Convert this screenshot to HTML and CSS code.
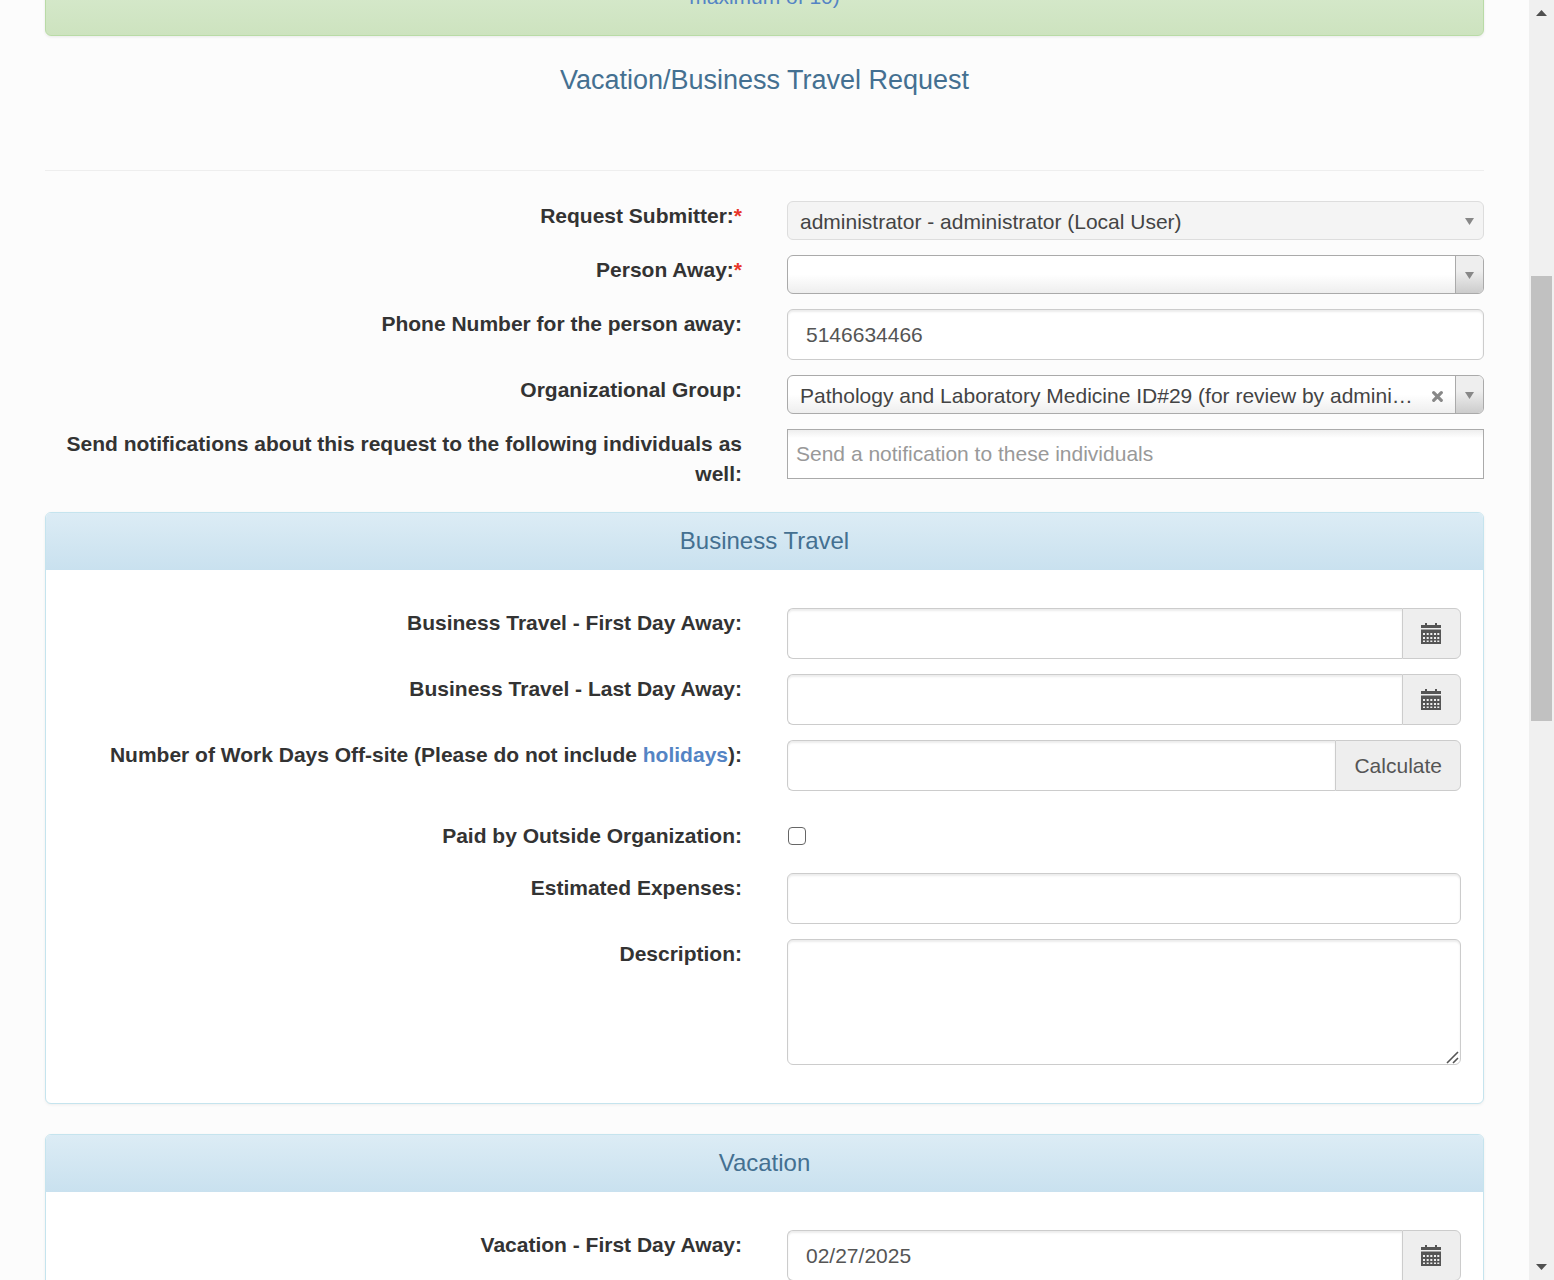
FILE: index.html
```html
<!DOCTYPE html>
<html lang="en">
<head>
<meta charset="utf-8">
<title>Vacation/Business Travel Request</title>
<link rel="stylesheet" href="styles.css">
</head>
<body>
<svg class="sprite" aria-hidden="true">
  <symbol id="calendar" viewBox="0 0 21 21">
    <path fill="currentColor" fill-rule="evenodd" d="M4 0h2v2h8V0h2v2h4v3H0V2h4zM0 6.500h20V21H0zM2 10v2h2v-2zM5.700 10v2h2v-2zM9.300 10v2h2v-2zM13 10v2h2v-2zM16.300 10v2h2v-2zM2 14v2h2v-2zM5.700 14v2h2v-2zM9.300 14v2h2v-2zM13 14v2h2v-2zM16.300 14v2h2v-2zM2 17.500v1.500h2v-1.500zM5.700 17.500v1.500h2v-1.500zM9.300 17.500v1.500h2v-1.500zM13 17.500v1.500h2v-1.500zM16.300 17.500v1.500h2v-1.500z"/>
  </symbol>
</svg>
<main class="page">
  <div class="alert"><a href="#">maximum of 10)</a></div>
  <h1 class="title">Vacation/Business Travel Request</h1>
  <hr class="divider">
  <form class="request">
    <div class="rows">
      <div class="row">
        <label for="submitter">Request Submitter:<span class="required">*</span></label>
        <div class="picker picker-disabled">
          <select id="submitter" disabled><option>administrator - administrator (Local User)</option></select>
        </div>
      </div>
      <div class="row">
        <label for="person">Person Away:<span class="required">*</span></label>
        <div class="picker">
          <select id="person"><option></option></select>
        </div>
      </div>
      <div class="row">
        <label for="phone">Phone Number for the person away:</label>
        <input class="field" id="phone" type="text" value="5146634466">
      </div>
      <div class="row">
        <label for="group">Organizational Group:</label>
        <div class="picker picker-clearable">
          <select id="group"><option>Pathology and Laboratory Medicine ID#29 (for review by administrator)</option></select>
          <button class="clear" type="button" aria-label="Clear">
            <svg width="11" height="11" viewBox="0 0 11 11"><path d="M1.700 1.700l7.600 7.600M9.300 1.700l-7.600 7.600" stroke="#888" stroke-width="3.200" stroke-linecap="round"/></svg>
          </button>
        </div>
      </div>
      <div class="row">
        <label for="notify">Send notifications about this request to the following individuals as well:</label>
        <input class="tags" id="notify" type="text" placeholder="Send a notification to these individuals">
      </div>
    </div>

    <section class="panel">
      <h2 class="panel-heading">Business Travel</h2>
      <div class="panel-body rows">
        <div class="row">
          <label for="travel-first">Business Travel - First Day Away:</label>
          <div class="group">
            <input class="field" id="travel-first" type="text">
            <button class="addon" type="button" aria-label="Choose date"><svg width="21" height="21"><use href="#calendar"/></svg></button>
          </div>
        </div>
        <div class="row">
          <label for="travel-last">Business Travel - Last Day Away:</label>
          <div class="group">
            <input class="field" id="travel-last" type="text">
            <button class="addon" type="button" aria-label="Choose date"><svg width="21" height="21"><use href="#calendar"/></svg></button>
          </div>
        </div>
        <div class="row">
          <label for="days">Number of Work Days Off-site (Please do not include <a href="#">holidays</a>):</label>
          <div class="group">
            <input class="field" id="days" type="text">
            <button class="addon" type="button">Calculate</button>
          </div>
        </div>
        <div class="row row-check">
          <label for="outside">Paid by Outside Organization:</label>
          <input class="check" id="outside" type="checkbox">
        </div>
        <div class="row">
          <label for="expenses">Estimated Expenses:</label>
          <input class="field" id="expenses" type="text">
        </div>
        <div class="row">
          <label for="description">Description:</label>
          <div class="area">
            <textarea class="field" id="description"></textarea>
            <svg class="grip" width="13" height="13" viewBox="0 0 13 13" aria-hidden="true"><path d="M1 12L12 1M7 12l5-5" stroke="#555" stroke-width="1.600"/></svg>
          </div>
        </div>
      </div>
    </section>

    <section class="panel">
      <h2 class="panel-heading">Vacation</h2>
      <div class="panel-body rows">
        <div class="row">
          <label for="vacation-first">Vacation - First Day Away:</label>
          <div class="group">
            <input class="field" id="vacation-first" type="text" value="02/27/2025">
            <button class="addon" type="button" aria-label="Choose date"><svg width="21" height="21"><use href="#calendar"/></svg></button>
          </div>
        </div>
      </div>
    </section>
  </form>
</main>
<div class="scrollbar" aria-hidden="true">
  <svg class="arrow" viewBox="0 0 11 6"><path d="M0 6L5.500 0 11 6z"/></svg>
  <div class="thumb"></div>
  <svg class="arrow arrow-down" viewBox="0 0 11 6"><path d="M0 0L5.500 6 11 0z"/></svg>
</div>
</body>
</html>
```
FILE: styles.css
```css
* { box-sizing: border-box; }

body {
  margin: 0;
  height: 100vh;
  overflow: hidden;
  display: grid;
  grid-template-columns: minmax(0, 1fr) 25px;
  background: #fcfcfc;
  color: #333;
  font: 21px/30px "Liberation Sans", Arial, sans-serif;
}

a { color: #5484c4; text-decoration: none; }
.sprite { display: none; }

/* The page is shown part-way down, so its top runs above the window. */
.page {
  min-width: 0;
  margin-top: -42px;
  padding: 0 45px;
}

.alert {
  padding: 23px;
  border: 1px solid #b9dba6;
  border-radius: 6px;
  background: linear-gradient(#dcedd4, #cde3bf);
  box-shadow: 0 1px 3px rgba(0, 0, 0, .08);
  text-align: center;
}

.title {
  margin: 29px 0 0;
  color: #447091;
  font-size: 27px;
  font-weight: 400;
  line-height: 30px;
  text-align: center;
}

.divider {
  margin: 75px 0 30px;
  border: 0;
  border-top: 1px solid #eee;
}

.rows { display: grid; gap: 15px; }

.row {
  display: grid;
  grid-template-columns: minmax(0, 1fr) minmax(0, 1fr);
  column-gap: 45px;
  align-items: start;
}

.row label { font-weight: 700; text-align: right; }
.required { color: #e8362a; }

.row-check { padding: 15px 0 7px; align-items: center; }

.check {
  appearance: none;
  width: 18px;
  height: 18px;
  margin: 0 0 0 1px;
  border: 1px solid #666;
  border-radius: 4px;
  background: #fff;
}

.field {
  display: block;
  width: 100%;
  height: 51px;
  padding: 9px 18px;
  border: 1px solid #ccc;
  border-radius: 6px;
  background: #fff;
  box-shadow: inset 0 2px 2px rgba(0, 0, 0, .075);
  color: #555;
  font: inherit;
}

.tags {
  width: 100%;
  height: 50px;
  padding: 0 8px;
  border: 1px solid #aaa;
  border-radius: 0;
  background: linear-gradient(#eee, #fff 8px);
  color: #444;
  font: inherit;
}
.tags::placeholder { color: #999; }

/* Drop-downs */
.picker { position: relative; }

.picker select {
  appearance: none;
  display: block;
  width: 100%;
  height: 39px;
  padding: 3px 40px 0 12px;
  border: 1px solid #aaa;
  border-radius: 6px;
  background: linear-gradient(#fff 50%, #eee);
  color: #444;
  font: inherit;
  text-overflow: ellipsis;
  overflow: hidden;
  white-space: nowrap;
}
.picker-clearable select { padding-right: 70px; }

.picker::before,
.picker::after {
  content: "";
  position: absolute;
  pointer-events: none;
}
.picker::before {
  top: 1px;
  right: 1px;
  bottom: 1px;
  width: 27px;
  border-left: 1px solid #aaa;
  border-radius: 0 5px 5px 0;
  background: linear-gradient(#eee 40%, #ccc);
}
.picker::after {
  top: 17px;
  right: 10px;
  width: 9px;
  height: 7px;
  background: #888;
  clip-path: polygon(0 0, 100% 0, 50% 100%);
}

.picker-disabled select {
  border-color: #ddd;
  background: #f4f4f4;
  opacity: 1;
}
.picker-disabled::before { display: none; }

.clear {
  position: absolute;
  top: 11px;
  right: 36px;
  width: 21px;
  height: 21px;
  padding: 5px;
  border: 0;
  background: none;
}
.clear svg { display: block; }

/* Text box with a button joined to its right */
.group { display: flex; }
.group .field {
  flex: 1;
  min-width: 0;
  border-right: 0;
  border-radius: 6px 0 0 6px;
}
.addon {
  padding: 0 18px;
  border: 1px solid #ccc;
  border-radius: 0 6px 6px 0;
  background: #eee;
  color: #555;
  font: inherit;
}
.addon svg { display: block; }

.area { position: relative; }
.area .field { height: 126px; resize: none; }
.grip {
  position: absolute;
  right: 2px;
  bottom: 1px;
  fill: none;
  pointer-events: none;
}

/* Panels */
.panel {
  margin: 23px 0 30px;
  border: 1px solid #c5e4ee;
  border-radius: 6px;
  background: #fff;
  box-shadow: 0 1px 3px rgba(0, 0, 0, .06);
}
.panel + .panel { margin-top: 0; }

.panel-heading {
  margin: 0;
  padding: 13px 22px 14px;
  border-radius: 5px 5px 0 0;
  background: linear-gradient(#dcecf5, #c9e1ef);
  color: #447091;
  font-size: 24px;
  font-weight: 400;
  line-height: 30px;
  text-align: center;
}
.panel-body { padding: 38px 22px; }

/* Scroll bar */
.scrollbar {
  display: grid;
  grid-template-rows: 26px 250fr 445fr 533fr 26px;
  justify-items: center;
  height: 100vh;
  background: #f0f0f0;
}
.arrow {
  grid-row: 1;
  align-self: center;
  width: 11px;
  height: 6px;
  fill: #505050;
}
.arrow-down { grid-row: 5; }
.thumb {
  grid-row: 3;
  width: 21px;
  background: #c1c1c1;
}
```
